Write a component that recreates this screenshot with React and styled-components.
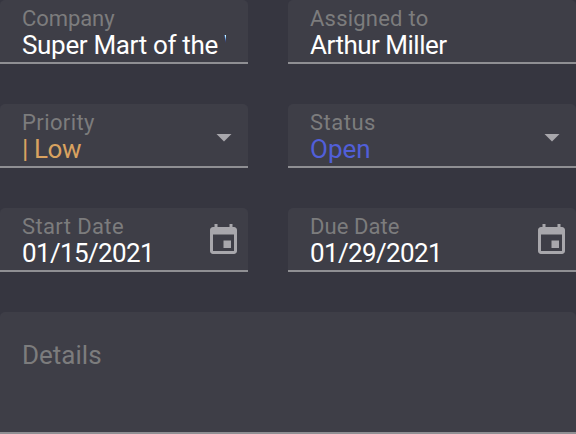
import React from 'react';
import styled, { createGlobalStyle } from 'styled-components';

const GlobalStyle = createGlobalStyle`
  * { box-sizing: border-box; }
  body { margin: 0; background: #363640; overflow: hidden; }
`;

const Form = styled.form`
  display: grid;
  grid-template-columns: 248px 288px;
  grid-template-rows: 64px 64px 64px 122px;
  gap: 40px;
  width: 576px;
  height: 434px;
  background: #363640;
  font-family: Roboto, sans-serif;
`;

const Field = styled.div`
  display: flex;
  align-items: center;
  padding: 0 6px 0 22px;
  background: #3e3e47;
  border-radius: 5px 5px 0 0;
  box-shadow: inset 0 -2px 0 #8f8f93;
`;

const Content = styled.div`
  display: flex;
  flex-direction: column;
  align-self: flex-start;
  flex: 1;
  min-width: 0;
  padding-top: 5px;
  margin-right: ${({ $plain }) => ($plain ? '16px' : '0')};
`;

const Label = styled.label`
  font-size: 22px;
  line-height: 27px;
  letter-spacing: ${({ $spacing }) => $spacing};
  color: #7c7c7d;
  white-space: nowrap;
`;

const Value = styled.div`
  font-size: 26px;
  line-height: 30px;
  margin-top: -2px;
  letter-spacing: ${({ $spacing }) => $spacing};
  color: ${({ $color }) => $color || '#fff'};
  white-space: nowrap;
  overflow: hidden;
`;

const Icon = styled.svg`
  flex: none;
  fill: #a8a7ac;
`;

const Arrow = styled(Icon)`
  width: 36px;
  height: 36px;
  margin-top: 2px;
`;

const Calendar = styled(Icon)`
  width: 27px;
  height: 30px;
  margin: 0 5px 2px 0;
`;

const DetailsField = styled(Field)`
  grid-column: 1 / -1;
  align-items: flex-start;
  padding-top: 28px;
`;

const DetailsLabel = styled.label`
  font-size: 26px;
  line-height: 30px;
  color: #7c7c7d;
`;

const ArrowIcon = () => (
  <Arrow viewBox="0 0 24 24">
    <path d="M7 10l5 5 5-5z" />
  </Arrow>
);

const CalendarIcon = () => (
  <Calendar viewBox="3 1 18 20">
    <path d="M17 12h-5v5h5v-5zM16 1v2H8V1H6v2H5c-1.11 0-1.99.9-1.99 2L3 19c0 1.1.89 2 2 2h14c1.1 0 2-.9 2-2V5c0-1.1-.9-2-2-2h-1V1h-2zm3 18H5V8h14v11z" />
  </Calendar>
);

function FormField({ label, labelSpacing, value, color, spacing, icon }) {
  return (
    <Field>
      <Content $plain={!icon}>
        <Label $spacing={labelSpacing}>{label}</Label>
        <Value $color={color} $spacing={spacing}>{value}</Value>
      </Content>
      {icon}
    </Field>
  );
}

export default function App() {
  return (
    <>
      <GlobalStyle />
      <Form>
        <FormField label="Company" labelSpacing="-0.08px" value="Super Mart of the West" spacing="-0.33px" />
        <FormField label="Assigned to" labelSpacing="0.22px" value="Arthur Miller" spacing="-0.5px" />
        <FormField label="Priority" labelSpacing="0.4px" value="| Low" spacing="-0.4px" color="#d9a260" icon={<ArrowIcon />} />
        <FormField label="Status" labelSpacing="0.5px" value="Open" spacing="0" color="#515fd9" icon={<ArrowIcon />} />
        <FormField label="Start Date" labelSpacing="0.38px" value="01/15/2021" spacing="-0.63px" icon={<CalendarIcon />} />
        <FormField label="Due Date" labelSpacing="0.08px" value="01/29/2021" spacing="-0.63px" icon={<CalendarIcon />} />
        <DetailsField>
          <DetailsLabel>Details</DetailsLabel>
        </DetailsField>
      </Form>
    </>
  );
}
